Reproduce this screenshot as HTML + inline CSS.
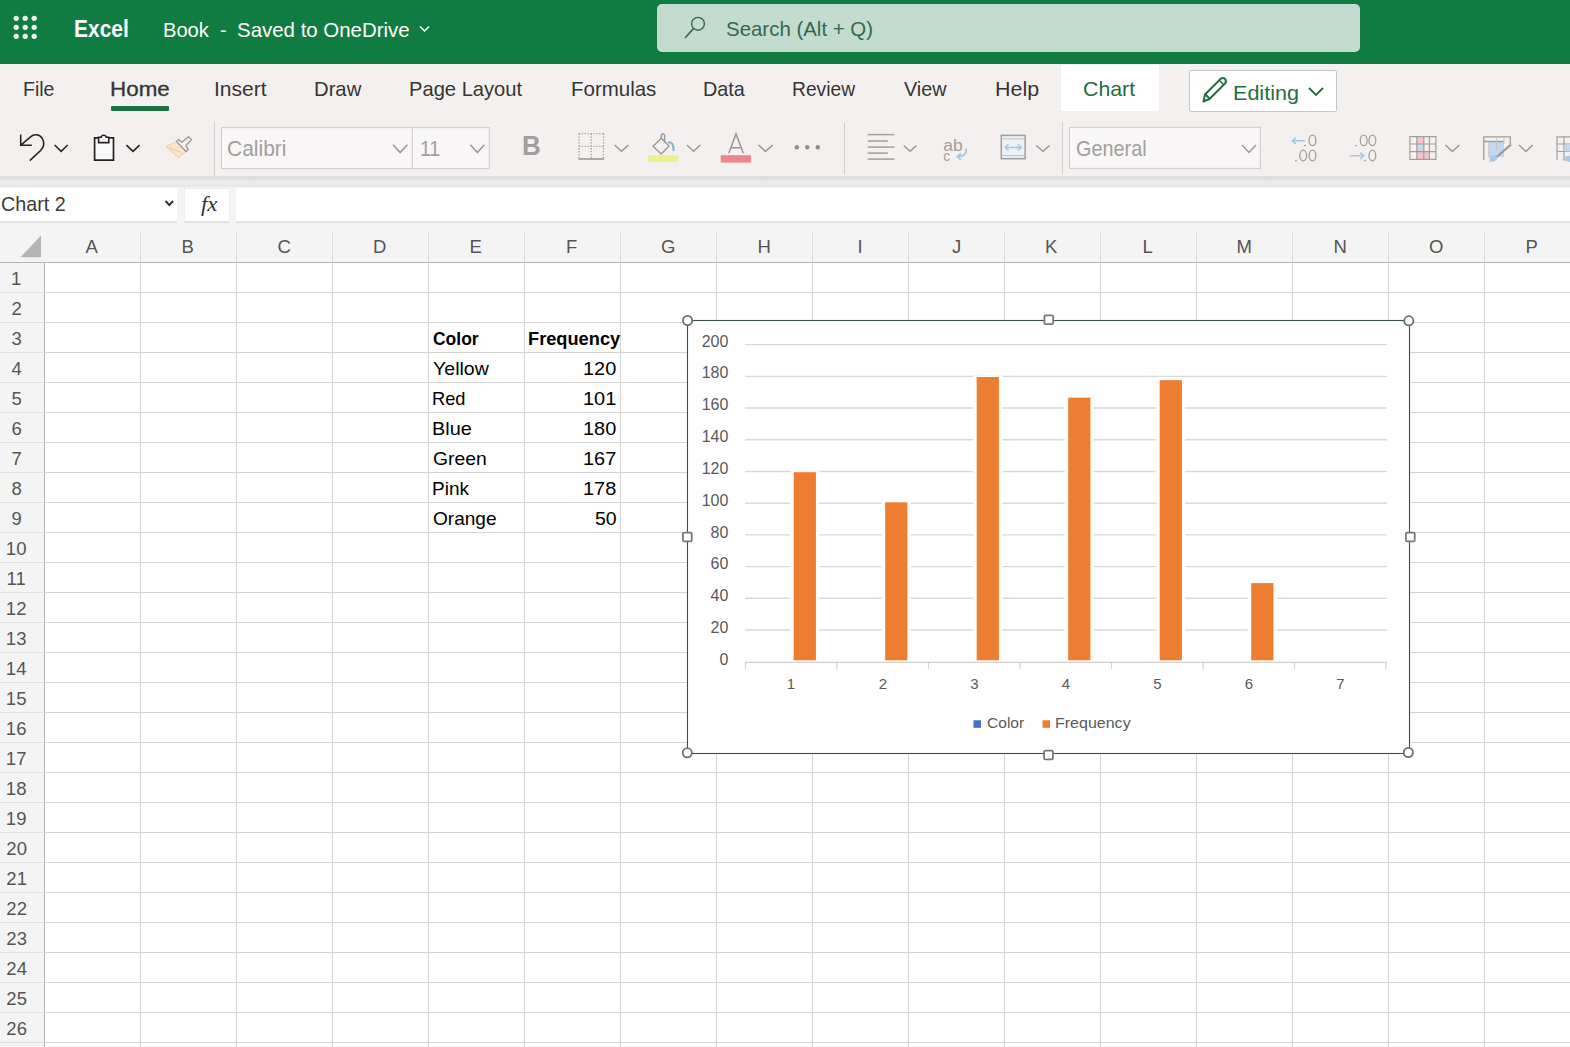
<!DOCTYPE html>
<html><head><meta charset="utf-8">
<style>
html,body{margin:0;padding:0;}
body{width:1570px;height:1047px;position:relative;overflow:hidden;background:#ffffff;font-family:"Liberation Sans",sans-serif;}
.t{position:absolute;white-space:pre;transform-origin:0 0;}
.a{position:absolute;}
</style></head><body>
<!-- top bar -->
<div class=a style="left:0;top:0;width:1570px;height:64px;background:#117c41"></div>
<svg class=a style="left:0;top:0" width="60" height="60">
<g fill="#f4fff8">
<circle cx="16.2" cy="18.3" r="2.6"/><circle cx="25.2" cy="18.3" r="2.6"/><circle cx="34.2" cy="18.3" r="2.6"/>
<circle cx="16.2" cy="27.3" r="2.6"/><circle cx="25.2" cy="27.3" r="2.6"/><circle cx="34.2" cy="27.3" r="2.6"/>
<circle cx="16.2" cy="36.3" r="2.6"/><circle cx="25.2" cy="36.3" r="2.6"/><circle cx="34.2" cy="36.3" r="2.6"/>
</g></svg>
<svg class=a style="left:415px;top:20px" width="20" height="16"><polyline points="5,6.5 9.5,11 14,6.5" fill="none" stroke="#fff" stroke-width="1.4"/></svg>
<div class=a style="left:657px;top:4px;width:703px;height:48px;background:#c4dbd0;border-radius:5px"></div>
<svg class=a style="left:680px;top:12px" width="30" height="30"><circle cx="18" cy="11.8" r="6.4" fill="none" stroke="#336a4a" stroke-width="1.4"/><line x1="13.6" y1="16.4" x2="5" y2="26" stroke="#336a4a" stroke-width="1.6"/></svg>

<!-- ribbon tabs -->
<div class=a style="left:0;top:64px;width:1570px;height:113px;background:#f4f0ef"></div>
<div class=a style="left:111px;top:106px;width:58px;height:5px;background:#1a7343;border-radius:1px"></div>
<div class=a style="left:1061px;top:65px;width:98px;height:46px;background:#ffffff"></div>
<div class=a style="left:1189px;top:70px;width:146px;height:40px;background:#ffffff;border:1px solid #c8c6c4;border-radius:2px"></div>
<svg class=a style="left:1195px;top:72px" width="40" height="36"><g fill="none" stroke="#1e6e42" stroke-width="2" stroke-linejoin="round">
<path d="M8.5 29.5 L10 22.5 L25.5 7 Q28 5 30 7 Q32 9.5 30 11.5 L14.5 27 Z"/><line x1="10.5" y1="22.5" x2="14.5" y2="26.5"/><line x1="24.5" y1="8.5" x2="28.5" y2="12.5" stroke-width="1.5"/></g></svg>
<svg class=a style="left:1305px;top:82px" width="22" height="18"><polyline points="4,6 11,13 18,6" fill="none" stroke="#1e6e42" stroke-width="1.8"/></svg>

<!-- toolbar shadow -->
<div class=a style="left:0;top:176px;width:1570px;height:12px;background:linear-gradient(#e0dfdf 0px,#dedede 3px,#e9e9e9 5px,#ededed 8px,#e5e5e5 9.5px,#f0f0f0 11px)"></div>
<!-- formula bar region -->
<div class=a style="left:0;top:188px;width:1570px;height:36px;background:#f4f4f4"></div>
<div class=a style="left:0;top:188px;width:177px;height:33px;background:#ffffff;border-bottom:2px solid #e2e2e2"></div>
<div class=a style="left:184px;top:188px;width:46px;height:35px;background:#ffffff;border:1px solid #eeeeee;border-bottom:2px solid #e2e2e2;box-sizing:border-box"></div>
<div class=a style="left:236px;top:188px;width:1334px;height:33px;background:#ffffff;border-bottom:2px solid #e2e2e2"></div>
<svg class=a style="left:160px;top:195px" width="20" height="16"><polyline points="5.5,6 9.3,10 13.1,6" fill="none" stroke="#323130" stroke-width="2"/></svg>

<!-- headers -->
<div class=a style="left:0;top:223px;width:1570px;height:39px;background:#f4f4f4"></div>
<div class=a style="left:0;top:262px;width:44px;height:785px;background:#f4f4f4"></div>
<svg class=a style="left:18px;top:233px" width="26" height="26"><polygon points="2.5,24.2 23,24.2 23,2.5" fill="#b5b5b5"/></svg>
<div class=a style="left:0;top:262px;width:1570px;height:1px;background:#b4b4b4"></div>
<div class=a style="left:44px;top:262px;width:1px;height:785px;background:#b4b4b4"></div>
<div style="position:absolute;left:140px;top:262px;width:1px;height:785px;background:#d3d3d3"></div>
<div style="position:absolute;left:236px;top:262px;width:1px;height:785px;background:#d3d3d3"></div>
<div style="position:absolute;left:332px;top:262px;width:1px;height:785px;background:#d3d3d3"></div>
<div style="position:absolute;left:428px;top:262px;width:1px;height:785px;background:#d3d3d3"></div>
<div style="position:absolute;left:524px;top:262px;width:1px;height:785px;background:#d3d3d3"></div>
<div style="position:absolute;left:620px;top:262px;width:1px;height:785px;background:#d3d3d3"></div>
<div style="position:absolute;left:716px;top:262px;width:1px;height:785px;background:#d3d3d3"></div>
<div style="position:absolute;left:812px;top:262px;width:1px;height:785px;background:#d3d3d3"></div>
<div style="position:absolute;left:908px;top:262px;width:1px;height:785px;background:#d3d3d3"></div>
<div style="position:absolute;left:1004px;top:262px;width:1px;height:785px;background:#d3d3d3"></div>
<div style="position:absolute;left:1100px;top:262px;width:1px;height:785px;background:#d3d3d3"></div>
<div style="position:absolute;left:1196px;top:262px;width:1px;height:785px;background:#d3d3d3"></div>
<div style="position:absolute;left:1292px;top:262px;width:1px;height:785px;background:#d3d3d3"></div>
<div style="position:absolute;left:1388px;top:262px;width:1px;height:785px;background:#d3d3d3"></div>
<div style="position:absolute;left:1484px;top:262px;width:1px;height:785px;background:#d3d3d3"></div>
<div style="position:absolute;left:1580px;top:262px;width:1px;height:785px;background:#d3d3d3"></div>
<div style="position:absolute;left:44px;top:292px;width:1526px;height:1px;background:#d3d3d3"></div>
<div style="position:absolute;left:0px;top:292px;width:44px;height:1px;background:#e1e1e1"></div>
<div style="position:absolute;left:44px;top:322px;width:1526px;height:1px;background:#d3d3d3"></div>
<div style="position:absolute;left:0px;top:322px;width:44px;height:1px;background:#e1e1e1"></div>
<div style="position:absolute;left:44px;top:352px;width:1526px;height:1px;background:#d3d3d3"></div>
<div style="position:absolute;left:0px;top:352px;width:44px;height:1px;background:#e1e1e1"></div>
<div style="position:absolute;left:44px;top:382px;width:1526px;height:1px;background:#d3d3d3"></div>
<div style="position:absolute;left:0px;top:382px;width:44px;height:1px;background:#e1e1e1"></div>
<div style="position:absolute;left:44px;top:412px;width:1526px;height:1px;background:#d3d3d3"></div>
<div style="position:absolute;left:0px;top:412px;width:44px;height:1px;background:#e1e1e1"></div>
<div style="position:absolute;left:44px;top:442px;width:1526px;height:1px;background:#d3d3d3"></div>
<div style="position:absolute;left:0px;top:442px;width:44px;height:1px;background:#e1e1e1"></div>
<div style="position:absolute;left:44px;top:472px;width:1526px;height:1px;background:#d3d3d3"></div>
<div style="position:absolute;left:0px;top:472px;width:44px;height:1px;background:#e1e1e1"></div>
<div style="position:absolute;left:44px;top:502px;width:1526px;height:1px;background:#d3d3d3"></div>
<div style="position:absolute;left:0px;top:502px;width:44px;height:1px;background:#e1e1e1"></div>
<div style="position:absolute;left:44px;top:532px;width:1526px;height:1px;background:#d3d3d3"></div>
<div style="position:absolute;left:0px;top:532px;width:44px;height:1px;background:#e1e1e1"></div>
<div style="position:absolute;left:44px;top:562px;width:1526px;height:1px;background:#d3d3d3"></div>
<div style="position:absolute;left:0px;top:562px;width:44px;height:1px;background:#e1e1e1"></div>
<div style="position:absolute;left:44px;top:592px;width:1526px;height:1px;background:#d3d3d3"></div>
<div style="position:absolute;left:0px;top:592px;width:44px;height:1px;background:#e1e1e1"></div>
<div style="position:absolute;left:44px;top:622px;width:1526px;height:1px;background:#d3d3d3"></div>
<div style="position:absolute;left:0px;top:622px;width:44px;height:1px;background:#e1e1e1"></div>
<div style="position:absolute;left:44px;top:652px;width:1526px;height:1px;background:#d3d3d3"></div>
<div style="position:absolute;left:0px;top:652px;width:44px;height:1px;background:#e1e1e1"></div>
<div style="position:absolute;left:44px;top:682px;width:1526px;height:1px;background:#d3d3d3"></div>
<div style="position:absolute;left:0px;top:682px;width:44px;height:1px;background:#e1e1e1"></div>
<div style="position:absolute;left:44px;top:712px;width:1526px;height:1px;background:#d3d3d3"></div>
<div style="position:absolute;left:0px;top:712px;width:44px;height:1px;background:#e1e1e1"></div>
<div style="position:absolute;left:44px;top:742px;width:1526px;height:1px;background:#d3d3d3"></div>
<div style="position:absolute;left:0px;top:742px;width:44px;height:1px;background:#e1e1e1"></div>
<div style="position:absolute;left:44px;top:772px;width:1526px;height:1px;background:#d3d3d3"></div>
<div style="position:absolute;left:0px;top:772px;width:44px;height:1px;background:#e1e1e1"></div>
<div style="position:absolute;left:44px;top:802px;width:1526px;height:1px;background:#d3d3d3"></div>
<div style="position:absolute;left:0px;top:802px;width:44px;height:1px;background:#e1e1e1"></div>
<div style="position:absolute;left:44px;top:832px;width:1526px;height:1px;background:#d3d3d3"></div>
<div style="position:absolute;left:0px;top:832px;width:44px;height:1px;background:#e1e1e1"></div>
<div style="position:absolute;left:44px;top:862px;width:1526px;height:1px;background:#d3d3d3"></div>
<div style="position:absolute;left:0px;top:862px;width:44px;height:1px;background:#e1e1e1"></div>
<div style="position:absolute;left:44px;top:892px;width:1526px;height:1px;background:#d3d3d3"></div>
<div style="position:absolute;left:0px;top:892px;width:44px;height:1px;background:#e1e1e1"></div>
<div style="position:absolute;left:44px;top:922px;width:1526px;height:1px;background:#d3d3d3"></div>
<div style="position:absolute;left:0px;top:922px;width:44px;height:1px;background:#e1e1e1"></div>
<div style="position:absolute;left:44px;top:952px;width:1526px;height:1px;background:#d3d3d3"></div>
<div style="position:absolute;left:0px;top:952px;width:44px;height:1px;background:#e1e1e1"></div>
<div style="position:absolute;left:44px;top:982px;width:1526px;height:1px;background:#d3d3d3"></div>
<div style="position:absolute;left:0px;top:982px;width:44px;height:1px;background:#e1e1e1"></div>
<div style="position:absolute;left:44px;top:1012px;width:1526px;height:1px;background:#d3d3d3"></div>
<div style="position:absolute;left:0px;top:1012px;width:44px;height:1px;background:#e1e1e1"></div>
<div style="position:absolute;left:44px;top:1042px;width:1526px;height:1px;background:#d3d3d3"></div>
<div style="position:absolute;left:0px;top:1042px;width:44px;height:1px;background:#e1e1e1"></div>
<div style="position:absolute;left:140px;top:233px;width:1px;height:29px;background:#dcdcdc"></div>
<div style="position:absolute;left:236px;top:233px;width:1px;height:29px;background:#dcdcdc"></div>
<div style="position:absolute;left:332px;top:233px;width:1px;height:29px;background:#dcdcdc"></div>
<div style="position:absolute;left:428px;top:233px;width:1px;height:29px;background:#dcdcdc"></div>
<div style="position:absolute;left:524px;top:233px;width:1px;height:29px;background:#dcdcdc"></div>
<div style="position:absolute;left:620px;top:233px;width:1px;height:29px;background:#dcdcdc"></div>
<div style="position:absolute;left:716px;top:233px;width:1px;height:29px;background:#dcdcdc"></div>
<div style="position:absolute;left:812px;top:233px;width:1px;height:29px;background:#dcdcdc"></div>
<div style="position:absolute;left:908px;top:233px;width:1px;height:29px;background:#dcdcdc"></div>
<div style="position:absolute;left:1004px;top:233px;width:1px;height:29px;background:#dcdcdc"></div>
<div style="position:absolute;left:1100px;top:233px;width:1px;height:29px;background:#dcdcdc"></div>
<div style="position:absolute;left:1196px;top:233px;width:1px;height:29px;background:#dcdcdc"></div>
<div style="position:absolute;left:1292px;top:233px;width:1px;height:29px;background:#dcdcdc"></div>
<div style="position:absolute;left:1388px;top:233px;width:1px;height:29px;background:#dcdcdc"></div>
<div style="position:absolute;left:1484px;top:233px;width:1px;height:29px;background:#dcdcdc"></div>
<div style="position:absolute;left:1580px;top:233px;width:1px;height:29px;background:#dcdcdc"></div>
<svg class=a style="left:0;top:0" width="1570" height="230">
<path d="M20.7 134.4 V145.3 H31.8 M21.2 144.8 L30.5 136.8 C34 133.6 40 134 42.6 139 C44.6 143 43.6 147.5 40.6 150.5 L29.8 160.7" fill="none" stroke="#252423" stroke-width="1.6"/>
<polyline points="54.6,145 61.15,151.3 67.7,145" fill="none" stroke="#252423" stroke-width="1.6"/>
<path d="M98.5 137.9 H94.6 V160.1 H113.5 V137.9 H109.2" fill="#f8f8f8" stroke="#252423" stroke-width="1.7"/>
<path d="M98.6 137.2 V142.6 H108.8 V137.2 H106.2 Q105.8 135.2 103.7 135.2 Q101.6 135.2 101.2 137.2 Z" fill="#f8f8f8" stroke="#252423" stroke-width="1.6"/>
<polyline points="126.4,145.1 133.00,151.4 139.6,145.1" fill="none" stroke="#252423" stroke-width="1.6"/>
<path d="M166.2 146.2 L176.6 141.8 L185.8 151.2 L178.6 157.6 Z" fill="#fce6c9" stroke="#f1d2a8" stroke-width="1.2" stroke-linejoin="round"/>
<path d="M169.5 147.8 L181.5 152.6" stroke="#eccca0" stroke-width="1"/>
<path d="M176.6 141.6 L178.8 139.6 L181.8 142.4 L188.4 136.8 L191.6 139.8 L185.8 145.6 L188.2 149.4 L186 151.4 Z" fill="#f8f6f6" stroke="#a19f9d" stroke-width="1.4" stroke-linejoin="round"/>
<line x1="214.5" y1="121" x2="214.5" y2="176" stroke="#d2d0ce" stroke-width="1"/>
<line x1="844.5" y1="123" x2="844.5" y2="174" stroke="#d2d0ce" stroke-width="1"/>
<line x1="1062.5" y1="122" x2="1062.5" y2="175" stroke="#d2d0ce" stroke-width="1"/>
<rect x="221.5" y="127.6" width="267.8" height="41" fill="#f8f6f6" stroke="#cdcbc9" stroke-width="1"/>
<line x1="412.3" y1="127.6" x2="412.3" y2="168.6" stroke="#cdcbc9" stroke-width="1"/>
<polyline points="393,144.8 400.15,152.6 407.3,144.8" fill="none" stroke="#9a9896" stroke-width="1.5"/>
<polyline points="470.4,144.8 477.35,152.6 484.3,144.8" fill="none" stroke="#9a9896" stroke-width="1.5"/>
<g stroke="#a19f9d" stroke-width="1.3" stroke-dasharray="1.3 1.6" fill="none"><path d="M578.9 133.6 H603.6 M579 133.6 V158.6 M603.5 133.6 V158.6 M579 146.3 H603.5 M591.2 133.6 V158.6"/></g>
<line x1="578.4" y1="159" x2="604.1" y2="159" stroke="#9a9896" stroke-width="1.6"/>
<polyline points="614.6,145 621.50,151.3 628.4,145" fill="none" stroke="#9a9896" stroke-width="1.5"/>
<path d="M653 146.2 L661.3 138.2 L669 146 L661.2 154 Z" fill="none" stroke="#9a9896" stroke-width="1.4"/>
<path d="M661.3 138.3 V135 Q663.2 132.5 664.6 135 V143" fill="none" stroke="#9a9896" stroke-width="1.4"/>
<path d="M668 142.6 Q673.6 141 673.6 151" fill="none" stroke="#8fb4cd" stroke-width="2.2"/>
<rect x="647.8" y="155.3" width="30.6" height="6.4" fill="#eef08a"/>
<polyline points="686.9,145 693.55,151.3 700.2,145" fill="none" stroke="#9a9896" stroke-width="1.5"/>
<path d="M728.8 153.3 L736 133.9 L743.4 153.3 M731.3 147.7 H740.8" fill="none" stroke="#9a9896" stroke-width="1.5"/>
<rect x="720.7" y="155.2" width="30.2" height="7.4" fill="#f0848b"/>
<polyline points="758.5,145 765.60,151.4 772.7,145" fill="none" stroke="#9a9896" stroke-width="1.5"/>
<circle cx="796.8" cy="147.2" r="2.2" fill="#8f8d8b"/>
<circle cx="807.2" cy="147.2" r="2.2" fill="#8f8d8b"/>
<circle cx="817.8" cy="147.2" r="2.2" fill="#8f8d8b"/>
<line x1="867.7" y1="134.6" x2="894.5" y2="134.6" stroke="#a19f9d" stroke-width="1.5"/>
<line x1="867.7" y1="141" x2="887.8" y2="141" stroke="#a19f9d" stroke-width="1.5"/>
<line x1="867.7" y1="147.1" x2="894.5" y2="147.1" stroke="#a19f9d" stroke-width="1.5"/>
<line x1="867.7" y1="153.1" x2="887.8" y2="153.1" stroke="#a19f9d" stroke-width="1.5"/>
<line x1="867.7" y1="159.1" x2="894.5" y2="159.1" stroke="#a19f9d" stroke-width="1.5"/>
<polyline points="903.8,145.5 910.15,151.2 916.5,145.5" fill="none" stroke="#9a9896" stroke-width="1.5"/>
<text x="943.3" y="151" font-family="Liberation Sans" font-size="16" fill="#a19f9d" textLength="19.5" lengthAdjust="spacingAndGlyphs">ab</text>
<text x="943.3" y="160.5" font-family="Liberation Sans" font-size="14" fill="#a19f9d">c</text>
<path d="M966.3 148.5 Q966.8 156.6 957.5 156.6 M960.8 153.4 L957.2 156.6 L960.8 159.6" fill="none" stroke="#a6c8de" stroke-width="1.7"/>
<rect x="1001.3" y="135.4" width="23.8" height="23.3" fill="#eaf2f8" stroke="#a19f9d" stroke-width="1.5"/>
<line x1="1001.3" y1="138.8" x2="1025" y2="138.8" stroke="#c2c0be" stroke-width="1"/>
<line x1="1001.3" y1="155.6" x2="1025" y2="155.6" stroke="#c2c0be" stroke-width="1"/>
<path d="M1005.2 147.4 H1021.2 M1008.6 144.3 L1005.2 147.4 L1008.6 150.5 M1017.8 144.3 L1021.2 147.4 L1017.8 150.5" fill="none" stroke="#a6c8de" stroke-width="1.5"/>
<polyline points="1036.2,145.5 1042.90,151.2 1049.6,145.5" fill="none" stroke="#9a9896" stroke-width="1.5"/>
<rect x="1069.5" y="127.3" width="190.9" height="41.1" fill="#f8f6f6" stroke="#cdcbc9" stroke-width="1"/>
<polyline points="1242,145 1249.00,152.5 1256,145" fill="none" stroke="#9a9896" stroke-width="1.5"/>
<path d="M1305.2 140.8 H1292.6 M1296 137.6 L1292.4 140.8 L1296 144" fill="none" stroke="#a6c8de" stroke-width="1.6"/>
<ellipse cx="1312.5" cy="140.4" rx="3.4" ry="5.3" fill="none" stroke="#a19f9d" stroke-width="1.3"/>
<ellipse cx="1303.2" cy="155.5" rx="3.4" ry="5.3" fill="none" stroke="#a19f9d" stroke-width="1.3"/>
<ellipse cx="1312.5" cy="155.5" rx="3.4" ry="5.3" fill="none" stroke="#a19f9d" stroke-width="1.3"/>
<circle cx="1305" cy="145.6" r="0.9" fill="#a19f9d"/><circle cx="1296" cy="160.6" r="0.9" fill="#a19f9d"/>
<ellipse cx="1363.7" cy="140.4" rx="3.4" ry="5.3" fill="none" stroke="#a19f9d" stroke-width="1.3"/>
<ellipse cx="1372.4" cy="140.4" rx="3.4" ry="5.3" fill="none" stroke="#a19f9d" stroke-width="1.3"/>
<ellipse cx="1372.4" cy="155.5" rx="3.4" ry="5.3" fill="none" stroke="#a19f9d" stroke-width="1.3"/>
<circle cx="1356" cy="145.6" r="0.9" fill="#a19f9d"/><circle cx="1365" cy="160.6" r="0.9" fill="#a19f9d"/>
<path d="M1349.6 155.8 H1363.6 M1360.2 152.6 L1363.8 155.8 L1360.2 159" fill="none" stroke="#a6c8de" stroke-width="1.6"/>
<rect x="1416.8" y="136.4" width="7" height="7.6" fill="#f7c3ca"/>
<rect x="1416.8" y="151.5" width="12.4" height="8.2" fill="#f7c3ca"/>
<rect x="1416.8" y="144" width="7" height="7.5" fill="#c7dbea"/>
<g stroke="#a19f9d" stroke-width="1.2" fill="none"><rect x="1409.9" y="136.6" width="26" height="22.8"/><path d="M1416.8 136.6 V159.4 M1423.8 136.6 V159.4 M1429.4 136.6 V159.4 M1409.9 144 H1435.9 M1409.9 151.6 H1435.9"/></g>
<polyline points="1445.5,145 1452.40,151.5 1459.3,145" fill="none" stroke="#9a9896" stroke-width="1.5"/>
<rect x="1488.8" y="141.5" width="15.2" height="15.5" fill="#c1d9ee"/>
<path d="M1483.8 160 V136.8 H1510.3 V144 M1483.8 141.5 H1504" fill="none" stroke="#a19f9d" stroke-width="1.3"/>
<path d="M1488.8 141.5 V157 M1496.5 136.8 V150 M1504 136.8 V144" fill="none" stroke="#c9c7c5" stroke-width="1"/>
<path d="M1511 144.5 L1495 158.5" stroke="#9a9896" stroke-width="2.2"/>
<path d="M1489.5 157 Q1495 153 1497.5 157.5 Q1496 162.5 1489.5 162 Z" fill="#a9cbe6"/>
<polyline points="1519.1,145 1525.85,151.5 1532.6,145" fill="none" stroke="#9a9896" stroke-width="1.5"/>
<g stroke="#a19f9d" stroke-width="1.2" fill="none"><path d="M1557 160 V136.8 H1572 M1557 144 H1572 M1557 151.5 H1572 M1564 136.8 V160"/></g>
<rect x="1564.5" y="144.5" width="6" height="7" fill="#c1d9ee"/><path d="M1562 160 Q1566 155 1570 156 V162 Z" fill="#a9cbe6"/>
</svg>
<svg class=a style="left:0;top:0" width="1570" height="1047">
<rect x="687.5" y="320.5" width="722" height="433" fill="#ffffff" stroke="#3a4f47" stroke-width="1.1"/>
<line x1="745" y1="344.65" x2="1387" y2="344.65" stroke="#d9d9d9" stroke-width="1.4"/>
<line x1="745" y1="376.36" x2="1387" y2="376.36" stroke="#d9d9d9" stroke-width="1.4"/>
<line x1="745" y1="408.06" x2="1387" y2="408.06" stroke="#d9d9d9" stroke-width="1.4"/>
<line x1="745" y1="439.77" x2="1387" y2="439.77" stroke="#d9d9d9" stroke-width="1.4"/>
<line x1="745" y1="471.47" x2="1387" y2="471.47" stroke="#d9d9d9" stroke-width="1.4"/>
<line x1="745" y1="503.18" x2="1387" y2="503.18" stroke="#d9d9d9" stroke-width="1.4"/>
<line x1="745" y1="534.89" x2="1387" y2="534.89" stroke="#d9d9d9" stroke-width="1.4"/>
<line x1="745" y1="566.59" x2="1387" y2="566.59" stroke="#d9d9d9" stroke-width="1.4"/>
<line x1="745" y1="598.30" x2="1387" y2="598.30" stroke="#d9d9d9" stroke-width="1.4"/>
<line x1="745" y1="630.00" x2="1387" y2="630.00" stroke="#d9d9d9" stroke-width="1.4"/>
<line x1="745" y1="662.4" x2="1387" y2="662.4" stroke="#d0d0d0" stroke-width="1.4"/>
<line x1="745.5" y1="662.4" x2="745.5" y2="669" stroke="#d0d0d0" stroke-width="1.2"/>
<line x1="837.0" y1="662.4" x2="837.0" y2="669" stroke="#d0d0d0" stroke-width="1.2"/>
<line x1="928.5" y1="662.4" x2="928.5" y2="669" stroke="#d0d0d0" stroke-width="1.2"/>
<line x1="1020.0" y1="662.4" x2="1020.0" y2="669" stroke="#d0d0d0" stroke-width="1.2"/>
<line x1="1111.5" y1="662.4" x2="1111.5" y2="669" stroke="#d0d0d0" stroke-width="1.2"/>
<line x1="1203.0" y1="662.4" x2="1203.0" y2="669" stroke="#d0d0d0" stroke-width="1.2"/>
<line x1="1294.5" y1="662.4" x2="1294.5" y2="669" stroke="#d0d0d0" stroke-width="1.2"/>
<line x1="1386.0" y1="662.4" x2="1386.0" y2="669" stroke="#d0d0d0" stroke-width="1.2"/>
<rect x="790.2" y="471.2" width="29" height="189.4" fill="#ffffff"/>
<rect x="793.7" y="472.2" width="22.2" height="188.1" fill="#ed7d31"/>
<rect x="881.7" y="501.3" width="29" height="159.3" fill="#ffffff"/>
<rect x="885.2" y="502.3" width="22.2" height="158.0" fill="#ed7d31"/>
<rect x="973.2" y="376.0" width="29" height="284.6" fill="#ffffff"/>
<rect x="976.7" y="377.0" width="22.2" height="283.3" fill="#ed7d31"/>
<rect x="1064.7" y="396.7" width="29" height="263.9" fill="#ffffff"/>
<rect x="1068.2" y="397.7" width="22.2" height="262.6" fill="#ed7d31"/>
<rect x="1156.2" y="379.2" width="29" height="281.4" fill="#ffffff"/>
<rect x="1159.7" y="380.2" width="22.2" height="280.1" fill="#ed7d31"/>
<rect x="1247.7" y="582.1" width="29" height="78.5" fill="#ffffff"/>
<rect x="1251.2" y="583.1" width="22.2" height="77.2" fill="#ed7d31"/>
<rect x="973.5" y="720.3" width="7.5" height="7.5" fill="#4472c4"/>
<rect x="1042.5" y="720.3" width="7.5" height="7.5" fill="#ed7d31"/>
<circle cx="687.6" cy="320.5" r="4.6" fill="#ffffff" stroke="#707070" stroke-width="1.8"/>
<circle cx="1408.8" cy="320.8" r="4.6" fill="#ffffff" stroke="#707070" stroke-width="1.8"/>
<circle cx="687.3" cy="752.8" r="4.6" fill="#ffffff" stroke="#707070" stroke-width="1.8"/>
<circle cx="1408.3" cy="752.5" r="4.6" fill="#ffffff" stroke="#707070" stroke-width="1.8"/>
<rect x="1044.4" y="315.4" width="8.8" height="8.8" rx="1.2" fill="#ffffff" stroke="#777777" stroke-width="1.8"/>
<rect x="682.9" y="532.6" width="8.8" height="8.8" rx="1.2" fill="#ffffff" stroke="#777777" stroke-width="1.8"/>
<rect x="1405.9" y="532.6" width="8.8" height="8.8" rx="1.2" fill="#ffffff" stroke="#777777" stroke-width="1.8"/>
<rect x="1044.1" y="750.6" width="8.8" height="8.8" rx="1.2" fill="#ffffff" stroke="#777777" stroke-width="1.8"/>
</svg>
<span class=t style="left:74.11px;top:18.03px;font:normal bold 23.5px/1 'Liberation Sans', sans-serif;color:#ffffff;transform:scaleX(0.8916);">Excel</span>
<span class=t style="left:162.84px;top:18.65px;font:normal normal 21px/1 'Liberation Sans', sans-serif;color:#ffffff;transform:scaleX(0.9585);">Book</span>
<span class=t style="left:219.70px;top:18.65px;font:normal normal 21px/1 'Liberation Sans', sans-serif;color:#ffffff;transform:scaleX(0.9571);">-</span>
<span class=t style="left:237.00px;top:18.65px;font:normal normal 21px/1 'Liberation Sans', sans-serif;color:#ffffff;transform:scaleX(0.9732);">Saved to OneDrive</span>
<span class=t style="left:725.80px;top:18.25px;font:normal normal 21px/1 'Liberation Sans', sans-serif;color:#336a4a;transform:scaleX(0.9731);">Search (Alt + Q)</span>
<span class=t style="left:23.27px;top:77.95px;font:normal normal 21px/1 'Liberation Sans', sans-serif;color:#363534;transform:scaleX(0.9267);">File</span>
<span class=t style="left:109.93px;top:77.95px;font:normal normal 21px/1 'Liberation Sans', sans-serif;color:#363534;transform:scaleX(1.0674);-webkit-text-stroke:0.3px #323130;">Home</span>
<span class=t style="left:214.40px;top:77.95px;font:normal normal 21px/1 'Liberation Sans', sans-serif;color:#363534;transform:scaleX(1.0022);">Insert</span>
<span class=t style="left:314.14px;top:77.95px;font:normal normal 21px/1 'Liberation Sans', sans-serif;color:#363534;transform:scaleX(0.9644);">Draw</span>
<span class=t style="left:409.04px;top:77.95px;font:normal normal 21px/1 'Liberation Sans', sans-serif;color:#363534;transform:scaleX(0.9590);">Page Layout</span>
<span class=t style="left:570.72px;top:77.95px;font:normal normal 21px/1 'Liberation Sans', sans-serif;color:#363534;transform:scaleX(0.9754);">Formulas</span>
<span class=t style="left:702.56px;top:77.95px;font:normal normal 21px/1 'Liberation Sans', sans-serif;color:#363534;transform:scaleX(0.9410);">Data</span>
<span class=t style="left:792.08px;top:77.95px;font:normal normal 21px/1 'Liberation Sans', sans-serif;color:#363534;transform:scaleX(0.9172);">Review</span>
<span class=t style="left:904.40px;top:77.95px;font:normal normal 21px/1 'Liberation Sans', sans-serif;color:#363534;transform:scaleX(0.9419);">View</span>
<span class=t style="left:994.58px;top:77.95px;font:normal normal 21px/1 'Liberation Sans', sans-serif;color:#363534;transform:scaleX(1.0214);">Help</span>
<span class=t style="left:1083.28px;top:77.95px;font:normal normal 21px/1 'Liberation Sans', sans-serif;color:#1e6e42;transform:scaleX(1.0155);">Chart</span>
<span class=t style="left:1232.57px;top:81.65px;font:normal normal 21px/1 'Liberation Sans', sans-serif;color:#1e6e42;transform:scaleX(1.0267);">Editing</span>
<span class=t style="left:227.02px;top:138.53px;font:normal normal 21.5px/1 'Liberation Sans', sans-serif;color:#a19f9d;transform:scaleX(0.9754);">Calibri</span>
<span class=t style="left:419.70px;top:138.53px;font:normal normal 21.5px/1 'Liberation Sans', sans-serif;color:#a19f9d;transform:scaleX(0.9037);">11</span>
<span class=t style="left:1076.08px;top:138.53px;font:normal normal 21.5px/1 'Liberation Sans', sans-serif;color:#a19f9d;transform:scaleX(0.9235);">General</span>
<span class=t style="left:522.47px;top:132.40px;font:normal bold 28px/1 'Liberation Sans', sans-serif;color:#a19f9d;transform:scaleX(0.9278);">B</span>
<span class=t style="left:0.50px;top:194.77px;font:normal normal 19.8px/1 'Liberation Sans', sans-serif;color:#3b3a39;transform:scaleX(0.9973);">Chart 2</span>
<span class=t style="left:200.50px;top:193.10px;font:italic normal 22px/1 'Liberation Serif', serif;color:#323130;transform:scaleX(1.0365);">fx</span>
<span class=t style="left:85.50px;top:237.97px;font:normal normal 18.5px/1 'Liberation Sans', sans-serif;color:#555555;transform:scaleX(1.0000);">A</span>
<span class=t style="left:181.50px;top:237.97px;font:normal normal 18.5px/1 'Liberation Sans', sans-serif;color:#555555;transform:scaleX(1.0000);">B</span>
<span class=t style="left:277.50px;top:237.97px;font:normal normal 18.5px/1 'Liberation Sans', sans-serif;color:#555555;transform:scaleX(1.0000);">C</span>
<span class=t style="left:373.00px;top:237.97px;font:normal normal 18.5px/1 'Liberation Sans', sans-serif;color:#555555;transform:scaleX(1.0000);">D</span>
<span class=t style="left:469.50px;top:237.97px;font:normal normal 18.5px/1 'Liberation Sans', sans-serif;color:#555555;transform:scaleX(1.0000);">E</span>
<span class=t style="left:566.00px;top:237.97px;font:normal normal 18.5px/1 'Liberation Sans', sans-serif;color:#555555;transform:scaleX(1.0000);">F</span>
<span class=t style="left:661.00px;top:237.97px;font:normal normal 18.5px/1 'Liberation Sans', sans-serif;color:#555555;transform:scaleX(1.0000);">G</span>
<span class=t style="left:757.50px;top:237.97px;font:normal normal 18.5px/1 'Liberation Sans', sans-serif;color:#555555;transform:scaleX(1.0000);">H</span>
<span class=t style="left:857.50px;top:237.97px;font:normal normal 18.5px/1 'Liberation Sans', sans-serif;color:#555555;transform:scaleX(1.0000);">I</span>
<span class=t style="left:952.00px;top:237.97px;font:normal normal 18.5px/1 'Liberation Sans', sans-serif;color:#555555;transform:scaleX(1.0000);">J</span>
<span class=t style="left:1045.00px;top:237.97px;font:normal normal 18.5px/1 'Liberation Sans', sans-serif;color:#555555;transform:scaleX(1.0000);">K</span>
<span class=t style="left:1142.50px;top:237.97px;font:normal normal 18.5px/1 'Liberation Sans', sans-serif;color:#555555;transform:scaleX(1.0000);">L</span>
<span class=t style="left:1236.50px;top:237.97px;font:normal normal 18.5px/1 'Liberation Sans', sans-serif;color:#555555;transform:scaleX(1.0000);">M</span>
<span class=t style="left:1333.50px;top:237.97px;font:normal normal 18.5px/1 'Liberation Sans', sans-serif;color:#555555;transform:scaleX(1.0000);">N</span>
<span class=t style="left:1429.00px;top:237.97px;font:normal normal 18.5px/1 'Liberation Sans', sans-serif;color:#555555;transform:scaleX(1.0000);">O</span>
<span class=t style="left:1525.50px;top:237.97px;font:normal normal 18.5px/1 'Liberation Sans', sans-serif;color:#555555;transform:scaleX(1.0000);">P</span>
<span class=t style="left:11.00px;top:269.67px;font:normal normal 18.5px/1 'Liberation Sans', sans-serif;color:#555555;transform:scaleX(1.0000);">1</span>
<span class=t style="left:11.50px;top:299.67px;font:normal normal 18.5px/1 'Liberation Sans', sans-serif;color:#555555;transform:scaleX(1.0000);">2</span>
<span class=t style="left:11.50px;top:329.67px;font:normal normal 18.5px/1 'Liberation Sans', sans-serif;color:#555555;transform:scaleX(1.0000);">3</span>
<span class=t style="left:11.50px;top:359.67px;font:normal normal 18.5px/1 'Liberation Sans', sans-serif;color:#555555;transform:scaleX(1.0000);">4</span>
<span class=t style="left:11.50px;top:389.67px;font:normal normal 18.5px/1 'Liberation Sans', sans-serif;color:#555555;transform:scaleX(1.0000);">5</span>
<span class=t style="left:11.50px;top:419.67px;font:normal normal 18.5px/1 'Liberation Sans', sans-serif;color:#555555;transform:scaleX(1.0000);">6</span>
<span class=t style="left:11.50px;top:449.67px;font:normal normal 18.5px/1 'Liberation Sans', sans-serif;color:#555555;transform:scaleX(1.0000);">7</span>
<span class=t style="left:11.50px;top:479.67px;font:normal normal 18.5px/1 'Liberation Sans', sans-serif;color:#555555;transform:scaleX(1.0000);">8</span>
<span class=t style="left:11.50px;top:509.67px;font:normal normal 18.5px/1 'Liberation Sans', sans-serif;color:#555555;transform:scaleX(1.0000);">9</span>
<span class=t style="left:5.86px;top:539.67px;font:normal normal 18.5px/1 'Liberation Sans', sans-serif;color:#555555;transform:scaleX(1.0000);">10</span>
<span class=t style="left:6.54px;top:569.67px;font:normal normal 18.5px/1 'Liberation Sans', sans-serif;color:#555555;transform:scaleX(1.0000);">11</span>
<span class=t style="left:5.86px;top:599.67px;font:normal normal 18.5px/1 'Liberation Sans', sans-serif;color:#555555;transform:scaleX(1.0000);">12</span>
<span class=t style="left:5.86px;top:629.67px;font:normal normal 18.5px/1 'Liberation Sans', sans-serif;color:#555555;transform:scaleX(1.0000);">13</span>
<span class=t style="left:5.86px;top:659.67px;font:normal normal 18.5px/1 'Liberation Sans', sans-serif;color:#555555;transform:scaleX(1.0000);">14</span>
<span class=t style="left:5.86px;top:689.67px;font:normal normal 18.5px/1 'Liberation Sans', sans-serif;color:#555555;transform:scaleX(1.0000);">15</span>
<span class=t style="left:5.86px;top:719.67px;font:normal normal 18.5px/1 'Liberation Sans', sans-serif;color:#555555;transform:scaleX(1.0000);">16</span>
<span class=t style="left:5.86px;top:749.67px;font:normal normal 18.5px/1 'Liberation Sans', sans-serif;color:#555555;transform:scaleX(1.0000);">17</span>
<span class=t style="left:5.86px;top:779.67px;font:normal normal 18.5px/1 'Liberation Sans', sans-serif;color:#555555;transform:scaleX(1.0000);">18</span>
<span class=t style="left:5.86px;top:809.67px;font:normal normal 18.5px/1 'Liberation Sans', sans-serif;color:#555555;transform:scaleX(1.0000);">19</span>
<span class=t style="left:6.36px;top:839.67px;font:normal normal 18.5px/1 'Liberation Sans', sans-serif;color:#555555;transform:scaleX(1.0000);">20</span>
<span class=t style="left:6.36px;top:869.67px;font:normal normal 18.5px/1 'Liberation Sans', sans-serif;color:#555555;transform:scaleX(1.0000);">21</span>
<span class=t style="left:6.36px;top:899.67px;font:normal normal 18.5px/1 'Liberation Sans', sans-serif;color:#555555;transform:scaleX(1.0000);">22</span>
<span class=t style="left:6.36px;top:929.67px;font:normal normal 18.5px/1 'Liberation Sans', sans-serif;color:#555555;transform:scaleX(1.0000);">23</span>
<span class=t style="left:6.36px;top:959.67px;font:normal normal 18.5px/1 'Liberation Sans', sans-serif;color:#555555;transform:scaleX(1.0000);">24</span>
<span class=t style="left:6.36px;top:989.67px;font:normal normal 18.5px/1 'Liberation Sans', sans-serif;color:#555555;transform:scaleX(1.0000);">25</span>
<span class=t style="left:6.36px;top:1019.68px;font:normal normal 18.5px/1 'Liberation Sans', sans-serif;color:#555555;transform:scaleX(1.0000);">26</span>
<span class=t style="left:432.70px;top:329.45px;font:normal bold 19px/1 'Liberation Sans', sans-serif;color:#000000;transform:scaleX(0.9201);">Color</span>
<span class=t style="left:528.04px;top:329.45px;font:normal bold 19px/1 'Liberation Sans', sans-serif;color:#000000;transform:scaleX(0.9590);">Frequency</span>
<span class=t style="left:432.80px;top:359.45px;font:normal normal 19px/1 'Liberation Sans', sans-serif;color:#000000;transform:scaleX(1.0293);">Yellow</span>
<span class=t style="left:583.15px;top:359.45px;font:normal normal 19px/1 'Liberation Sans', sans-serif;color:#000000;transform:scaleX(1.0487);">120</span>
<span class=t style="left:431.84px;top:389.45px;font:normal normal 19px/1 'Liberation Sans', sans-serif;color:#000000;transform:scaleX(0.9613);">Red</span>
<span class=t style="left:583.15px;top:389.45px;font:normal normal 19px/1 'Liberation Sans', sans-serif;color:#000000;transform:scaleX(1.0487);">101</span>
<span class=t style="left:431.76px;top:419.45px;font:normal normal 19px/1 'Liberation Sans', sans-serif;color:#000000;transform:scaleX(1.0450);">Blue</span>
<span class=t style="left:583.15px;top:419.45px;font:normal normal 19px/1 'Liberation Sans', sans-serif;color:#000000;transform:scaleX(1.0487);">180</span>
<span class=t style="left:432.80px;top:449.45px;font:normal normal 19px/1 'Liberation Sans', sans-serif;color:#000000;transform:scaleX(1.0184);">Green</span>
<span class=t style="left:583.15px;top:449.45px;font:normal normal 19px/1 'Liberation Sans', sans-serif;color:#000000;transform:scaleX(1.0487);">167</span>
<span class=t style="left:431.80px;top:479.45px;font:normal normal 19px/1 'Liberation Sans', sans-serif;color:#000000;transform:scaleX(1.0011);">Pink</span>
<span class=t style="left:583.15px;top:479.45px;font:normal normal 19px/1 'Liberation Sans', sans-serif;color:#000000;transform:scaleX(1.0487);">178</span>
<span class=t style="left:432.80px;top:509.45px;font:normal normal 19px/1 'Liberation Sans', sans-serif;color:#000000;transform:scaleX(1.0031);">Orange</span>
<span class=t style="left:594.70px;top:509.45px;font:normal normal 19px/1 'Liberation Sans', sans-serif;color:#000000;transform:scaleX(1.0259);">50</span>
<span class=t style="left:701.70px;top:333.60px;font:normal normal 16px/1 'Liberation Sans', sans-serif;color:#595959;transform:scaleX(1.0000);">200</span>
<span class=t style="left:701.70px;top:365.44px;font:normal normal 16px/1 'Liberation Sans', sans-serif;color:#595959;transform:scaleX(1.0000);">180</span>
<span class=t style="left:701.70px;top:397.28px;font:normal normal 16px/1 'Liberation Sans', sans-serif;color:#595959;transform:scaleX(1.0000);">160</span>
<span class=t style="left:701.70px;top:429.12px;font:normal normal 16px/1 'Liberation Sans', sans-serif;color:#595959;transform:scaleX(1.0000);">140</span>
<span class=t style="left:701.70px;top:460.96px;font:normal normal 16px/1 'Liberation Sans', sans-serif;color:#595959;transform:scaleX(1.0000);">120</span>
<span class=t style="left:701.70px;top:492.80px;font:normal normal 16px/1 'Liberation Sans', sans-serif;color:#595959;transform:scaleX(1.0000);">100</span>
<span class=t style="left:710.60px;top:524.64px;font:normal normal 16px/1 'Liberation Sans', sans-serif;color:#595959;transform:scaleX(1.0000);">80</span>
<span class=t style="left:710.60px;top:556.48px;font:normal normal 16px/1 'Liberation Sans', sans-serif;color:#595959;transform:scaleX(1.0000);">60</span>
<span class=t style="left:710.60px;top:588.32px;font:normal normal 16px/1 'Liberation Sans', sans-serif;color:#595959;transform:scaleX(1.0000);">40</span>
<span class=t style="left:710.60px;top:620.16px;font:normal normal 16px/1 'Liberation Sans', sans-serif;color:#595959;transform:scaleX(1.0000);">20</span>
<span class=t style="left:719.50px;top:652.00px;font:normal normal 16px/1 'Liberation Sans', sans-serif;color:#595959;transform:scaleX(1.0000);">0</span>
<span class=t style="left:786.80px;top:676.25px;font:normal normal 15px/1 'Liberation Sans', sans-serif;color:#595959;transform:scaleX(1.0000);">1</span>
<span class=t style="left:878.80px;top:676.25px;font:normal normal 15px/1 'Liberation Sans', sans-serif;color:#595959;transform:scaleX(1.0000);">2</span>
<span class=t style="left:970.30px;top:676.25px;font:normal normal 15px/1 'Liberation Sans', sans-serif;color:#595959;transform:scaleX(1.0000);">3</span>
<span class=t style="left:1061.80px;top:676.25px;font:normal normal 15px/1 'Liberation Sans', sans-serif;color:#595959;transform:scaleX(1.0000);">4</span>
<span class=t style="left:1153.30px;top:676.25px;font:normal normal 15px/1 'Liberation Sans', sans-serif;color:#595959;transform:scaleX(1.0000);">5</span>
<span class=t style="left:1244.80px;top:676.25px;font:normal normal 15px/1 'Liberation Sans', sans-serif;color:#595959;transform:scaleX(1.0000);">6</span>
<span class=t style="left:1336.30px;top:676.25px;font:normal normal 15px/1 'Liberation Sans', sans-serif;color:#595959;transform:scaleX(1.0000);">7</span>
<span class=t style="left:987.00px;top:714.85px;font:normal normal 15px/1 'Liberation Sans', sans-serif;color:#595959;transform:scaleX(1.0377);">Color</span>
<span class=t style="left:1055.23px;top:714.85px;font:normal normal 15px/1 'Liberation Sans', sans-serif;color:#595959;transform:scaleX(1.0672);">Frequency</span>
</body></html>
